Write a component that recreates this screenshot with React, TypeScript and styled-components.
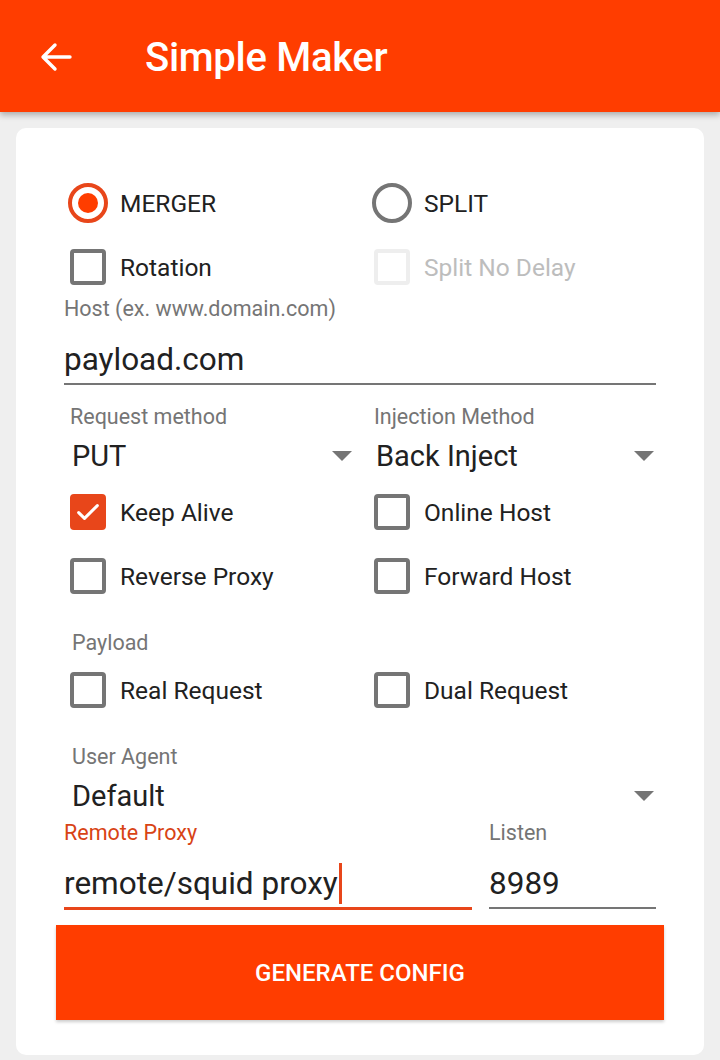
import * as React from 'react';
import styled, {createGlobalStyle} from 'styled-components';

const accent = '#e8461a';
const brand = '#ff3d00';

const GlobalStyle = createGlobalStyle`
  html, body {
    margin: 0;
    padding: 0;
    background: #efefef;
    font-family: Roboto, "Noto Sans", sans-serif;
  }
`;

const View = styled.div`
  width: 720px;
  height: 1060px;
  overflow: hidden;
  background: #efefef;
`;

const AppBar = styled.div`
  height: 112px;
  background: ${brand};
  display: flex;
  align-items: center;
  box-shadow: 0 3px 6px rgba(0, 0, 0, 0.28);
  position: relative;
  z-index: 1;
`;

const BackButton = styled.div`
  width: 32px;
  height: 32px;
  margin-left: 40px;
  margin-top: 2px;
  display: flex;
  align-items: center;
`;

const Title = styled.div`
  margin-left: 73px;
  margin-top: 4px;
  color: #fff;
  font-size: 40px;
  font-weight: 500;
  line-height: 1;
  letter-spacing: -0.3px;
`;

const Card = styled.div`
  margin: 16px 16px 0;
  height: 927px;
  box-sizing: border-box;
  background: #fff;
  border-radius: 10px;
  padding: 43px 48px 0;
  display: flex;
  flex-direction: column;
`;

const Grid = styled.div`
  display: grid;
  grid-template-columns: 290px 1fr;
  column-gap: 14px;
`;

const OptionRow = styled.div<{$height?: number}>`
  height: ${p => p.$height ?? 64}px;
  display: flex;
  align-items: center;
`;

const RadioMark = styled.div<{$on?: boolean}>`
  width: 40px;
  height: 40px;
  box-sizing: border-box;
  border-radius: 50%;
  border: 4px solid ${p => (p.$on ? accent : '#757575')};
  display: flex;
  align-items: center;
  justify-content: center;
  margin-left: 4px;
  margin-right: 12px;
  &::after {
    content: '';
    display: ${p => (p.$on ? 'block' : 'none')};
    width: 20px;
    height: 20px;
    border-radius: 50%;
    background: ${brand};
  }
`;

const Box = styled.div<{$on?: boolean; $disabled?: boolean}>`
  width: 36px;
  height: 36px;
  box-sizing: border-box;
  border-radius: 4px;
  border: 4px solid
    ${p => (p.$on ? accent : p.$disabled ? '#eeeeee' : '#757575')};
  background: ${p => (p.$on ? accent : 'transparent')};
  margin-left: 6px;
  margin-right: 14px;
  display: flex;
  align-items: center;
  justify-content: center;
`;

const OptionText = styled.span<{$disabled?: boolean}>`
  font-size: 24.5px;
  color: ${p => (p.$disabled ? '#bdbdbd' : '#212121')};
`;

const Label = styled.div<{$top: number; $inset?: number; $focused?: boolean}>`
  margin-top: ${p => p.$top}px;
  padding-left: ${p => p.$inset ?? 0}px;
  font-size: 21.5px;
  line-height: 24px;
  color: ${p => (p.$focused ? '#d84315' : '#757575')};
`;

const TextField = styled.div<{$focused?: boolean}>`
  margin-top: 21px;
  height: 36px;
  font-size: 31.5px;
  line-height: 36px;
  color: #212121;
  padding-bottom: 5px;
  border-bottom: ${p => (p.$focused ? `3px solid ${accent}` : '2px solid #757575')};
  display: flex;
  align-items: center;
`;

const Caret = styled.span`
  display: inline-block;
  width: 3px;
  height: 41px;
  margin: -3px 0 -2px 1px;
  background: ${accent};
`;

const Spinner = styled.div<{$top: number}>`
  margin-top: ${p => p.$top}px;
  height: 40px;
  display: flex;
  align-items: center;
  justify-content: space-between;
  padding-left: 8px;
  font-size: 29px;
  color: #212121;
`;

const Arrow = styled.div`
  width: 0;
  height: 0;
  margin-right: 2px;
  border-left: 10px solid transparent;
  border-right: 10px solid transparent;
  border-top: 10px solid #757575;
`;

const Stack = styled.div<{$top?: number}>`
  margin-top: ${p => p.$top ?? 0}px;
`;

const ProxyRow = styled.div`
  display: grid;
  grid-template-columns: 408px 1fr;
  column-gap: 17px;
`;

const GenerateButton = styled.div`
  margin: 15px -8px 0;
  height: 95px;
  background: ${brand};
  color: #fff;
  display: flex;
  align-items: center;
  justify-content: center;
  font-size: 24px;
  font-weight: 500;
  box-shadow: 0 2px 3px rgba(0, 0, 0, 0.2);
`;

const Check = () => (
  <svg width="28" height="28" viewBox="0 0 24 24">
    <path d="M4 12.5l5 5L20 6.5" fill="none" stroke="#fff" strokeWidth="2.6" strokeLinecap="round" strokeLinejoin="round" />
  </svg>
);

const Radio = ({on, text}: {on?: boolean; text: string}) => (
  <OptionRow>
    <RadioMark $on={on} />
    <OptionText>{text}</OptionText>
  </OptionRow>
);

const CheckOption = ({on, disabled, text}: {on?: boolean; disabled?: boolean; text: string}) => (
  <OptionRow>
    <Box $on={on} $disabled={disabled}>{on && <Check />}</Box>
    <OptionText $disabled={disabled}>{text}</OptionText>
  </OptionRow>
);

export default function App() {
  return (
    <View>
      <GlobalStyle />
      <AppBar>
        <BackButton>
          <svg width="32" height="32" viewBox="0 0 32 32">
            <path d="M30 16H4M15 4L3 16l12 12" fill="none" stroke="#fff" strokeWidth="3.4" strokeLinecap="round" strokeLinejoin="round" />
          </svg>
        </BackButton>
        <Title>Simple Maker</Title>
      </AppBar>
      <Card>
        <Grid>
          <Radio on text="MERGER" />
          <Radio text="SPLIT" />
          <CheckOption text="Rotation" />
          <CheckOption disabled text="Split No Delay" />
        </Grid>
        <Label $top={-2}>Host (ex. www.domain.com)</Label>
        <TextField>payload.com</TextField>
        <Grid>
          <Stack>
            <Label $top={20} $inset={6}>Request method</Label>
            <Spinner $top={7}>PUT<Arrow /></Spinner>
          </Stack>
          <Stack>
            <Label $top={20} $inset={6}>Injection Method</Label>
            <Spinner $top={7}>Back Inject<Arrow /></Spinner>
          </Stack>
        </Grid>
        <Grid>
          <Stack $top={4}>
            <CheckOption on text="Keep Alive" />
            <CheckOption text="Reverse Proxy" />
          </Stack>
          <Stack $top={4}>
            <CheckOption text="Online Host" />
            <CheckOption text="Forward Host" />
          </Stack>
        </Grid>
        <Label $top={23} $inset={8}>Payload</Label>
        <Grid>
          <Stack $top={3}>
            <CheckOption text="Real Request" />
          </Stack>
          <Stack $top={3}>
            <CheckOption text="Dual Request" />
          </Stack>
        </Grid>
        <Label $top={23} $inset={8}>User Agent</Label>
        <Spinner $top={7}>Default<Arrow /></Spinner>
        <ProxyRow>
          <Stack>
            <Label $top={5} $focused>Remote Proxy</Label>
            <TextField $focused>remote/squid proxy<Caret /></TextField>
          </Stack>
          <Stack>
            <Label $top={5}>Listen</Label>
            <TextField>8989</TextField>
          </Stack>
        </ProxyRow>
        <GenerateButton>GENERATE CONFIG</GenerateButton>
      </Card>
    </View>
  );
}
